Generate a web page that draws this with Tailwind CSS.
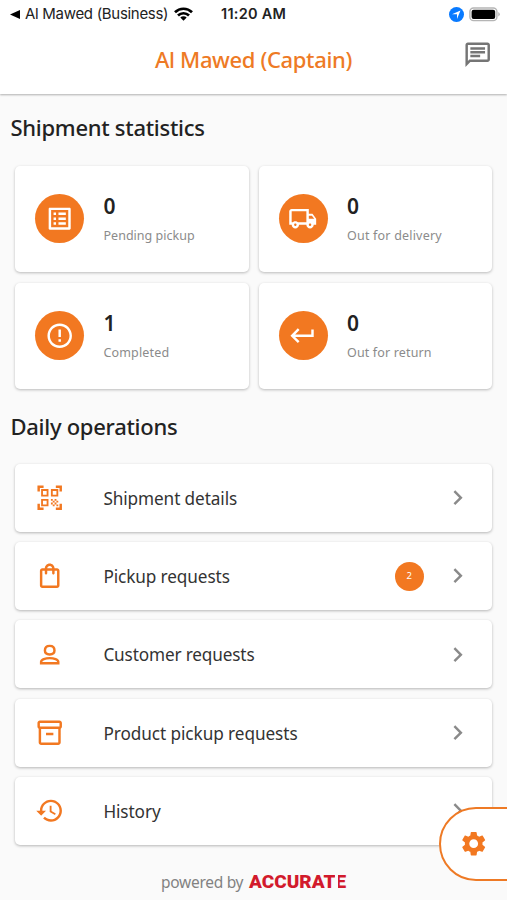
<!DOCTYPE html>
<html lang="en">
<head>
<meta charset="utf-8">
<title>Al Mawed (Captain)</title>
<script src="https://cdn.jsdelivr.net/npm/@tailwindcss/browser@4"></script>
</head>
<body class="relative h-[900px] w-[507px] overflow-hidden bg-[#fafafa] font-['Noto_Sans',sans-serif] text-[#222]">
<header class="relative h-[94px] bg-white shadow-[0_1px_2px_rgba(0,0,0,0.3)]">
  <div class="flex h-[28px] items-center pl-[10px] pr-[7px] font-['Inter',sans-serif] text-[#222]">
    <svg class="h-[9px] w-[10px]" viewBox="0 0 10 9"><path d="M0 4.5L10 0v9z"/></svg>
    <span class="ml-[5px] w-[145px] whitespace-nowrap text-[15px] tracking-[-0.3px]">Al Mawed (Business)</span>
    <svg class="ml-[4px] h-[14px] w-[19px]" viewBox="0 0 19 14" fill="none" stroke="#000" stroke-width="2.7"><path d="M1 5.2a12.2 12.2 0 0 1 17 0M4 8.5a7.9 7.9 0 0 1 11 0"/><path d="M9.5 13.8L6.3 10.6a4.6 4.6 0 0 1 6.4 0z" fill="#000" stroke="none"/></svg>
    <span class="ml-[28px] whitespace-nowrap text-[14.5px] font-semibold tracking-[0.25px]">11:20 AM</span>
    <svg class="ml-auto h-[15px] w-[15px]" viewBox="0 0 15 15"><circle cx="7.5" cy="7.5" r="7.5" fill="#087aff"/><path d="M11.5 3.5L8 12V7.3H3z" fill="#fff"/></svg>
    <svg class="ml-[5px] h-[15px] w-[31px]" viewBox="0 0 31 15"><rect x=".9" y="1" width="27" height="12.6" rx="3.6" fill="#fff" stroke="#b5b5b5" stroke-width="1.4"/><rect x="2.6" y="2.7" width="23.6" height="9.2" rx="2" fill="#000"/><path d="M29.4 5v4.5q1.3-.8 1.3-2.2T29.4 5z" fill="#aaa"/></svg>
  </div>
  <div class="grid h-[64px] grid-cols-[60px_1fr_60px]">
    <h1 class="col-start-2 text-center text-[22px] font-medium leading-[63px] text-[#ee7a25]"><span class="whitespace-nowrap tracking-[-0.35px]">Al Mawed (Captain)</span></h1>
    <svg class="ml-[15.5px] mt-[11.5px] h-[29.4px] w-[29.4px]" viewBox="0 0 24 24" fill="#757575"><path d="M4 4h16v12H5.17L4 17.17V4m0-2c-1.1 0-1.99.9-1.99 2L2 22l4-4h14c1.1 0 2-.9 2-2V4c0-1.1-.9-2-2-2H4zm2 10h8v2H6v-2zm0-3h12v2H6V9zm0-3h12v2H6V6z"/></svg>
  </div>
</header>
<main>
  <h2 class="h-[72px] pl-[10.5px] text-[22px] font-medium leading-[67px]"><span class="whitespace-nowrap tracking-[-0.28px]">Shipment statistics</span></h2>
  <section class="grid grid-cols-2 gap-x-[10px] gap-y-[11px] pl-[15px] pr-[15px]">
    <div class="flex h-[106px] items-center rounded-[5px] bg-white pl-[20px] shadow-[0_1px_3px_rgba(0,0,0,0.26)]">
      <div class="-mt-[1px] flex size-[49px] items-center justify-center rounded-full bg-[#f27821]"><svg class="size-[29.4px]" viewBox="0 0 24 24" fill="#fff"><path d="M19 5v14H5V5h14m1.1-2H3.9c-.5 0-.9.4-.9.9v16.2c0 .4.4.9.9.9h16.2c.4 0 .9-.5.9-.9V3.9c0-.5-.5-.9-.9-.9zM11 7h6v2h-6V7zm0 4h6v2h-6v-2zm0 4h6v2h-6zM7 7h2v2H7zm0 4h2v2H7zm0 4h2v2H7z"/></svg></div>
      <div class="ml-[19.5px]"><div class="text-[21px] font-semibold leading-[28px]">0</div><div class="mt-[6px] text-[12.5px] leading-[20px] text-[#8b8b8b]"><span class="whitespace-nowrap tracking-[0.02px]">Pending pickup</span></div></div>
    </div>
    <div class="flex h-[106px] items-center rounded-[5px] bg-white pl-[20px] shadow-[0_1px_3px_rgba(0,0,0,0.26)]">
      <div class="-mt-[1px] flex size-[49px] items-center justify-center rounded-full bg-[#f27821]"><svg class="size-[29.4px]" viewBox="0 0 24 24" fill="#fff"><path d="M20 8h-3V4H3c-1.1 0-2 .9-2 2v11h2c0 1.66 1.34 3 3 3s3-1.34 3-3h6c0 1.66 1.34 3 3 3s3-1.34 3-3h2v-5l-3-4zm-.5 1.5l1.96 2.5H17V9.5h2.5zM6 18c-.55 0-1-.45-1-1s.45-1 1-1 1 .45 1 1-.45 1-1 1zm2.22-3c-.55-.61-1.33-1-2.22-1s-1.67.39-2.22 1H3V6h12v9H8.22zM18 18c-.55 0-1-.45-1-1s.45-1 1-1 1 .45 1 1-.45 1-1 1z"/></svg></div>
      <div class="ml-[19.5px]"><div class="text-[21px] font-semibold leading-[28px]">0</div><div class="mt-[6px] text-[12.5px] leading-[20px] text-[#8b8b8b]"><span class="whitespace-nowrap tracking-[0.2px]">Out for delivery</span></div></div>
    </div>
    <div class="flex h-[106px] items-center rounded-[5px] bg-white pl-[20px] shadow-[0_1px_3px_rgba(0,0,0,0.26)]">
      <div class="-mt-[1px] flex size-[49px] items-center justify-center rounded-full bg-[#f27821]"><svg class="size-[29.4px]" viewBox="0 0 24 24" fill="#fff"><path d="M11 15h2v2h-2zm0-8h2v6h-2zm.99-5C6.47 2 2 6.48 2 12s4.47 10 9.99 10C17.52 22 22 17.52 22 12S17.52 2 11.99 2zM12 20c-4.42 0-8-3.58-8-8s3.58-8 8-8 8 3.58 8 8-3.58 8-8 8z"/></svg></div>
      <div class="ml-[19.5px]"><div class="text-[21px] font-semibold leading-[28px]">1</div><div class="mt-[6px] text-[12.5px] leading-[20px] text-[#8b8b8b]"><span class="whitespace-nowrap tracking-[0.15px]">Completed</span></div></div>
    </div>
    <div class="flex h-[106px] items-center rounded-[5px] bg-white pl-[20px] shadow-[0_1px_3px_rgba(0,0,0,0.26)]">
      <div class="-mt-[1px] flex size-[49px] items-center justify-center rounded-full bg-[#f27821]"><svg class="size-[29.4px]" viewBox="0 0 24 24" fill="#fff"><path d="M19 7v4H5.83l3.58-3.59L8 6l-6 6 6 6 1.41-1.41L5.83 13H21V7z"/></svg></div>
      <div class="ml-[19.5px]"><div class="text-[21px] font-semibold leading-[28px]">0</div><div class="mt-[6px] text-[12.5px] leading-[20px] text-[#8b8b8b]"><span class="whitespace-nowrap tracking-[0.15px]">Out for return</span></div></div>
    </div>
  </section>
  <h2 class="h-[75px] pl-[10.5px] text-[22px] font-medium leading-[75px]"><span class="whitespace-nowrap tracking-[-0.28px]">Daily operations</span></h2>
  <nav class="flex flex-col gap-[10.2px] pl-[15px] pr-[15px] text-[17.2px] text-[#333]">
    <div class="flex h-[68px] items-center rounded-[5px] bg-white pl-[20px] pr-[19.5px] shadow-[0_1px_3px_rgba(0,0,0,0.28)]">
      <svg class="size-[29.4px]" viewBox="0 0 24 24" fill="#f27821"><path d="M9.5 6.5v3h-3v-3h3M11 5H5v6h6V5zm-1.5 9.5v3h-3v-3h3M11 13H5v6h6v-6zm6.5-6.5v3h-3v-3h3M19 5h-6v6h6V5zm-6 8h1.5v1.5H13V13zm1.5 1.5H16V16h-1.5v-1.5zM16 13h1.5v1.5H16V13zm-3 3h1.5v1.5H13V16zm1.5 1.5H16V19h-1.5v-1.5zM16 16h1.5v1.5H16V16zm1.5-1.5H19V16h-1.5v-1.5zm0 3H19V19h-1.5v-1.5zM22 7h-2V4h-3V2h5v5zm0 15v-5h-2v3h-3v2h5zM2 22h5v-2H4v-3H2v5zM2 2v5h2V4h3V2H2z"/></svg>
      <span class="ml-[39px] mt-[2px] whitespace-nowrap tracking-[-0.1px]">Shipment details</span>
      <svg class="ml-auto size-[29.4px]" viewBox="0 0 24 24" fill="#8a8a8a"><path d="M10 6L8.59 7.41 13.17 12l-4.58 4.59L10 18l6-6z"/></svg>
    </div>
    <div class="flex h-[68px] items-center rounded-[5px] bg-white pl-[20px] pr-[19.5px] shadow-[0_1px_3px_rgba(0,0,0,0.28)]">
      <svg class="size-[29.4px]" viewBox="0 0 24 24" fill="#f27821"><path d="M18 6h-2c0-2.21-1.79-4-4-4S8 3.79 8 6H6c-1.1 0-2 .9-2 2v12c0 1.1.9 2 2 2h12c1.1 0 2-.9 2-2V8c0-1.1-.9-2-2-2zm-6-2c1.1 0 2 .9 2 2h-4c0-1.1.9-2 2-2zm6 16H6V8h2v2c0 .55.45 1 1 1s1-.45 1-1V8h4v2c0 .55.45 1 1 1s1-.45 1-1V8h2v12z"/></svg>
      <span class="ml-[39px] mt-[2px] whitespace-nowrap tracking-[-0.1px]">Pickup requests</span>
      <span class="ml-auto flex size-[29px] items-center justify-center rounded-full bg-[#f27821] text-[9.5px] text-white">2</span>
      <svg class="ml-[19.5px] size-[29.4px]" viewBox="0 0 24 24" fill="#8a8a8a"><path d="M10 6L8.59 7.41 13.17 12l-4.58 4.59L10 18l6-6z"/></svg>
    </div>
    <div class="flex h-[68px] items-center rounded-[5px] bg-white pl-[20px] pr-[19.5px] shadow-[0_1px_3px_rgba(0,0,0,0.28)]">
      <svg class="size-[29.4px]" viewBox="0 0 24 24" fill="none" stroke="#f27821" stroke-width="2"><path d="M12 4.8c2.4 0 3.9 1.5 3.9 3.8 0 2-1.3 3.2-3.9 3.2S8.100 10.600 8.100 8.600c0-2.300 1.500-3.800 3.900-3.800zM5 19v-1.200c0-1.800 3.500-3 7-3s7 1.200 7 3V19z"/></svg>
      <span class="ml-[39px] mt-[2px] whitespace-nowrap tracking-[-0.15px]">Customer requests</span>
      <svg class="ml-auto size-[29.4px]" viewBox="0 0 24 24" fill="#8a8a8a"><path d="M10 6L8.59 7.41 13.17 12l-4.58 4.59L10 18l6-6z"/></svg>
    </div>
    <div class="flex h-[68px] items-center rounded-[5px] bg-white pl-[20px] pr-[19.5px] shadow-[0_1px_3px_rgba(0,0,0,0.28)]">
      <svg class="size-[29.4px]" viewBox="0 0 24 24" fill="#f27821"><path d="M20 2H4c-1 0-2 .9-2 2v3.010c0 .72.43 1.340 1 1.690V20c0 1.100 1.100 2 2 2h14c.9 0 2-.9 2-2V8.700c.57-.35 1-.97 1-1.690V4c0-1.100-1-2-2-2zm-1 18H5V9h14v11zm1-13H4V4h16v3zM9 12h6v2H9z"/></svg>
      <span class="ml-[39px] mt-[2px] whitespace-nowrap tracking-[-0.07px]">Product pickup requests</span>
      <svg class="ml-auto size-[29.4px]" viewBox="0 0 24 24" fill="#8a8a8a"><path d="M10 6L8.59 7.41 13.17 12l-4.58 4.59L10 18l6-6z"/></svg>
    </div>
    <div class="flex h-[68px] items-center rounded-[5px] bg-white pl-[20px] pr-[19.5px] shadow-[0_1px_3px_rgba(0,0,0,0.28)]">
      <svg class="size-[29.4px]" viewBox="0 0 24 24" fill="#f27821"><path d="M13 3c-4.97 0-9 4.03-9 9H1l3.89 3.89.07.14L9 12H6c0-3.87 3.13-7 7-7s7 3.13 7 7-3.13 7-7 7c-1.93 0-3.68-.79-4.94-2.06l-1.42 1.42C8.27 19.99 10.51 21 13 21c4.97 0 9-4.03 9-9s-4.03-9-9-9zm-1 5v5l4.28 2.54.72-1.21-3.5-2.08V8H12z"/></svg>
      <span class="ml-[39px] mt-[2px] whitespace-nowrap tracking-[-0.1px]">History</span>
      <svg class="ml-auto size-[29.4px]" viewBox="0 0 24 24" fill="#8a8a8a"><path d="M10 6L8.59 7.41 13.17 12l-4.58 4.59L10 18l6-6z"/></svg>
    </div>
  </nav>
</main>
<footer class="flex h-[55px] items-center pl-[161px] pt-[20px] text-[15.5px] leading-[24px] text-[#828282]">
  <span class="w-[88px] whitespace-nowrap tracking-[-0.28px]">powered by</span>
  <span class="relative font-['Roboto',sans-serif] text-[19px] font-black text-[#d21a2c]"><span class="whitespace-nowrap">ACCURATE</span><span class="absolute right-[8.5px] top-[3px] h-[18px] w-[2.5px] bg-[#fafafa]"></span></span>
</footer>
<button aria-label="Settings" class="absolute left-[438.5px] top-[807px] flex h-[73.5px] w-[90px] items-center rounded-l-full border-[2.5px] border-[#ee7a25] bg-white pl-[18px]">
  <svg class="size-[29.4px]" viewBox="0 0 24 24" fill="#f27821"><path d="M19.14 12.94c.04-.3.06-.61.06-.94 0-.32-.02-.64-.07-.94l2.03-1.58c.18-.14.23-.41.12-.61l-1.92-3.32c-.12-.22-.37-.29-.59-.22l-2.39.96c-.5-.38-1.03-.7-1.62-.94l-.36-2.54c-.04-.24-.24-.41-.48-.41h-3.84c-.24 0-.43.17-.47.41l-.36 2.54c-.59.24-1.13.57-1.62.94l-2.39-.96c-.22-.08-.47 0-.59.22L2.74 8.87c-.12.21-.08.47.12.61l2.03 1.58c-.05.3-.09.63-.09.94s.02.64.07.94l-2.03 1.58c-.18.14-.23.41-.12.61l1.92 3.32c.12.22.37.29.59.22l2.39-.96c.5.38 1.03.7 1.62.94l.36 2.54c.05.24.24.41.48.41h3.84c.24 0 .44-.17.47-.41l.36-2.54c.59-.24 1.13-.56 1.62-.94l2.39.96c.22.08.47 0 .59-.22l1.92-3.32c.12-.22.07-.47-.12-.61l-2.01-1.58zM12 15.6c-1.98 0-3.6-1.62-3.6-3.6s1.62-3.6 3.6-3.6 3.6 1.62 3.6 3.6-1.62 3.6-3.6 3.6z"/></svg>
</button>
</body>
</html>
